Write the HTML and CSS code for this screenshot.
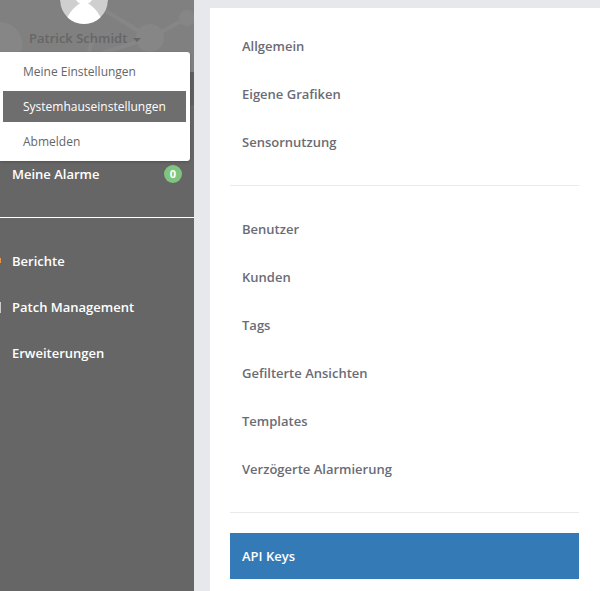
FILE: index.html
```html
<!DOCTYPE html>
<html lang="de">
<head>
<meta charset="utf-8">
<title>Systemhauseinstellungen</title>
<link rel="stylesheet" href="styles.css">
</head>
<body>
<div class="layout">
  <aside class="sidebar">
    <div class="profile">
      <svg class="network" width="194" height="72" viewBox="0 0 194 72">
        <circle cx="0" cy="44" r="22" fill="#868686"/>
        <path d="M104 10L150 38L187 18M150 38L105 52L78 72M92 40L84 72" stroke="#868686" stroke-width="4" fill="none"/>
        <circle cx="150" cy="38" r="14" fill="#868686"/>
        <circle cx="187" cy="18" r="8" fill="#868686"/>
      </svg>
      <div class="avatar">
        <svg width="48" height="48" viewBox="0 0 48 48">
          <circle cx="24" cy="24" r="24" fill="#cfcfcf"/>
          <ellipse cx="24" cy="19" rx="9" ry="10" fill="#fff"/>
          <path d="M7 42C11 34 16 30 19 28L29 28C32 30 37 34 41 42A24 24 0 0 1 7 42Z" fill="#fff"/>
        </svg>
      </div>
      <div class="user-name">Patrick Schmidt <span class="caret"></span></div>
    </div>
    <div class="shade"></div>
    <ul class="dropdown">
      <li class="dropdown-item">Meine Einstellungen</li>
      <li class="dropdown-item dropdown-active">Systemhauseinstellungen</li>
      <li class="dropdown-item">Abmelden</li>
    </ul>
    <div class="nav-top">
      <div class="nav-item">Meine Alarme <span class="badge">0</span></div>
    </div>
    <nav class="nav-main">
      <div class="nav-item"><span class="edge-icon edge-orange"></span>Berichte</div>
      <div class="nav-item"><span class="edge-icon edge-grey"></span>Patch Management</div>
      <div class="nav-item">Erweiterungen</div>
    </nav>
  </aside>
  <main class="panel">
    <ul class="menu">
      <li class="menu-item">Allgemein</li>
      <li class="menu-item">Eigene Grafiken</li>
      <li class="menu-item">Sensornutzung</li>
    </ul>
    <ul class="menu">
      <li class="menu-item">Benutzer</li>
      <li class="menu-item">Kunden</li>
      <li class="menu-item">Tags</li>
      <li class="menu-item">Gefilterte Ansichten</li>
      <li class="menu-item">Templates</li>
      <li class="menu-item">Verzögerte Alarmierung</li>
    </ul>
    <ul class="menu">
      <li class="menu-item menu-active">API Keys</li>
    </ul>
  </main>
</div>
</body>
</html>
```
FILE: styles.css
```css
* { box-sizing: border-box; }
html, body { margin: 0; height: 100%; overflow: hidden; }
body { background: #e7e8ec; font-family: "Open Sans", sans-serif; font-size: 13px; }
ul { list-style: none; margin: 0; padding: 0; }
.layout { display: flex; height: 591px; }
.sidebar { width: 194px; flex: none; background: #666; position: relative; }
.profile { height: 72px; background: #808080; position: relative; overflow: hidden; }
.network { position: absolute; left: 0; top: 0; }
.avatar { position: absolute; left: 60px; top: -24px; width: 48px; height: 48px; border-radius: 50%; overflow: hidden; }
.avatar svg { display: block; }
.user-name { position: absolute; left: 29px; top: 28px; color: #666; font-weight: 600; font-size: 13px; line-height: 20px; white-space: nowrap; }
.caret { display: inline-block; width: 0; height: 0; margin-left: 2px; vertical-align: middle; border-top: 4px solid #666; border-left: 4px solid transparent; border-right: 4px solid transparent; }
.shade { position: absolute; left: 0; top: 72px; width: 100%; height: 33px; background: #5f5f5f; }
.dropdown { position: absolute; left: 0; top: 52px; width: 190px; height: 109px; padding: 4px 4px 4px 3px; background: #fff; border-radius: 0 3px 3px 0; box-shadow: 0 1px 3px rgba(0,0,0,.2); z-index: 2; }
.dropdown-item { height: 31px; margin-bottom: 4px; padding-left: 20px; color: #666; font-size: 12px; line-height: 31px; }
.dropdown-active { background: #6e6e6e; color: #fff; }
.nav-top { height: 146px; padding-top: 89px; border-bottom: 1px solid #fff; }
.nav-main { padding-top: 20px; }
.nav-item { position: relative; height: 46px; padding-left: 12px; color: #fff; font-weight: 600; font-size: 13px; line-height: 46px; }
.nav-top .nav-item { height: 26px; line-height: 26px; }
.badge { position: absolute; right: 12px; top: 4px; width: 18px; height: 18px; border-radius: 50%; background: #7fc47f; color: #fff; font-weight: 700; font-size: 11px; line-height: 18px; text-align: center; }
.edge-icon { position: absolute; left: 0; width: 1px; }
.edge-orange { top: 20px; height: 5px; background: #e8954a; }
.edge-grey { top: 18px; height: 11px; background: #ccc; }
.panel { flex: 1; margin: 8px 0 0 16px; padding: 15px 21px 0 20px; background: #fff; }
.menu { border-bottom: 1px solid #eaeaea; margin-bottom: 20px; padding-bottom: 20px; }
.menu:last-child { border-bottom: 0; }
.menu-item { height: 46px; margin-bottom: 2px; padding-left: 12px; color: #6a6c75; font-weight: 600; font-size: 13px; line-height: 46px; }
.menu-item:last-child { margin-bottom: 0; }
.menu-active { background: #337ab7; color: #fff; }
```
